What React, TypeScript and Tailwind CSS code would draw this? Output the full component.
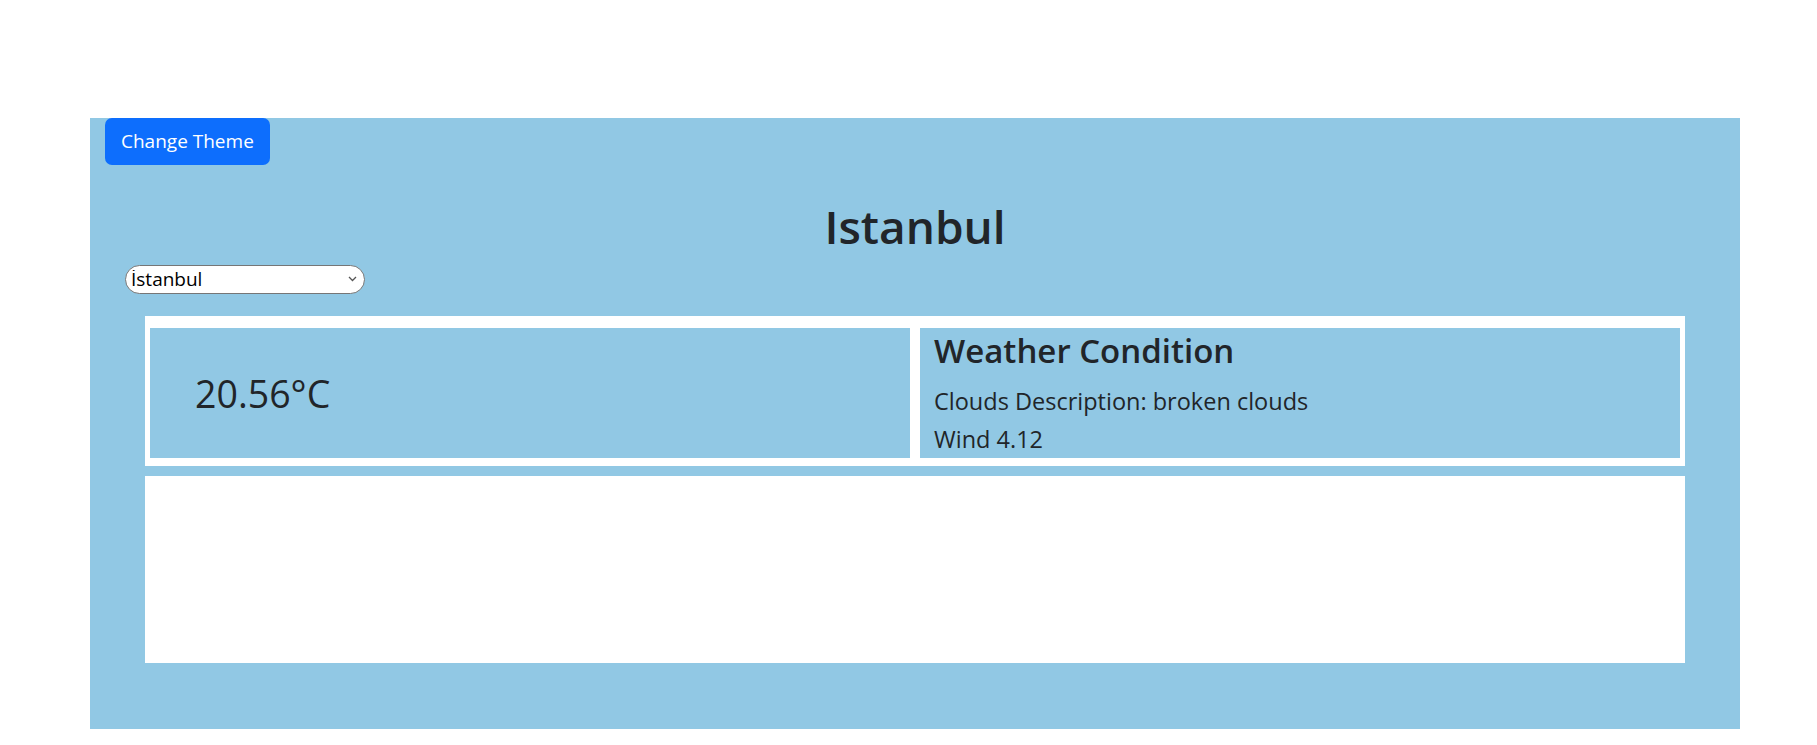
import React, { useState } from 'react';

const cities = ['İstanbul', 'Ankara', 'İzmir', 'Bursa', 'Antalya'];

const App: React.FC = () => {
  const [city, setCity] = useState('İstanbul');

  return (
    <div className="min-h-screen bg-white pt-[118px] text-[#212529] font-['Open_Sans',sans-serif]">
      <div className="ml-[90px] w-[1650px] bg-[#91c8e4] pb-[66px]">
        {/* Theme button */}
        <button className="ml-[15px] h-[47px] rounded-[7px] bg-[#0d6efd] px-4 text-[19px] text-white">
          Change Theme
        </button>

        {/* City title */}
        <h1 className="mt-[34px] text-center text-[46px] font-semibold leading-[1.2]">Istanbul</h1>

        {/* City picker */}
        <div className="relative ml-[35px] mt-[11px] w-[240px]">
          <select
            value={city}
            onChange={e => setCity(e.target.value)}
            className="h-[29px] w-full appearance-none rounded-full border border-[#767676] bg-white pl-[5px] text-[19px] leading-none text-black"
          >
            {cities.map(c => (
              <option key={c}>{c}</option>
            ))}
          </select>
          <svg className="pointer-events-none absolute right-[8px] top-[11px]" width="9" height="6" viewBox="0 0 9 6">
            <path d="M1 1l3.5 3.5L8 1" fill="none" stroke="#555" strokeWidth="1.3" />
          </svg>
        </div>

        <div className="mx-[55px] mt-[22px] flex flex-col gap-[10px]">
          {/* Current weather */}
          <div className="bg-white px-[5px] pb-[13px] pt-[12px]">
            <div className="grid h-[125px] grid-cols-2 gap-[10px]">
              <div className="flex items-center bg-[#91c8e4] pl-[45px] pt-[3px] text-[37.5px]">20.56°C</div>
              <div className="bg-[#91c8e4] pl-[14px] pt-[3px]">
                <h2 className="text-[33px] font-semibold leading-[1.2]">Weather Condition</h2>
                <p className="mt-[11px] text-[23.5px] leading-[38px]">Clouds Description: broken clouds</p>
                <p className="text-[23.5px] leading-[38px]">Wind 4.12</p>
              </div>
            </div>
          </div>

          {/* Forecast area */}
          <div className="h-[187px] bg-white"></div>
        </div>
      </div>
    </div>
  );
};

export default App;
